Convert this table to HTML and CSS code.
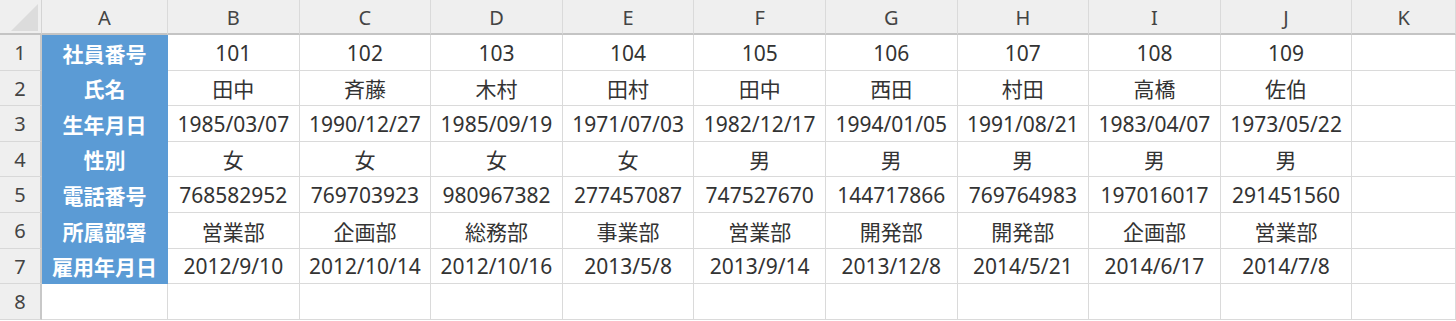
FILE: index.html
```html
<!DOCTYPE html>
<html lang="ja">
<head>
<meta charset="utf-8">
<title>社員一覧</title>
<link rel="stylesheet" href="styles.css">
</head>
<body>
<div class="sheet">
  <div class="corner"><svg class="tri" width="28" height="28" viewBox="0 0 28 28"><polygon points="27,0 27,27 0,27" fill="#dcdcdc"/></svg></div>
  <div class="ch">A</div><div class="ch">B</div><div class="ch">C</div><div class="ch">D</div><div class="ch">E</div><div class="ch">F</div><div class="ch">G</div><div class="ch">H</div><div class="ch">I</div><div class="ch">J</div><div class="ch">K</div>

  <div class="rh">1</div><div class="c lab">社員番号</div><div class="c">101</div><div class="c">102</div><div class="c">103</div><div class="c">104</div><div class="c">105</div><div class="c">106</div><div class="c">107</div><div class="c">108</div><div class="c">109</div><div class="c"></div>
  <div class="rh">2</div><div class="c lab">氏名</div><div class="c">田中</div><div class="c">斉藤</div><div class="c">木村</div><div class="c">田村</div><div class="c">田中</div><div class="c">西田</div><div class="c">村田</div><div class="c">高橋</div><div class="c">佐伯</div><div class="c"></div>
  <div class="rh">3</div><div class="c lab">生年月日</div><div class="c">1985/03/07</div><div class="c">1990/12/27</div><div class="c">1985/09/19</div><div class="c">1971/07/03</div><div class="c">1982/12/17</div><div class="c">1994/01/05</div><div class="c">1991/08/21</div><div class="c">1983/04/07</div><div class="c">1973/05/22</div><div class="c"></div>
  <div class="rh">4</div><div class="c lab">性別</div><div class="c">女</div><div class="c">女</div><div class="c">女</div><div class="c">女</div><div class="c">男</div><div class="c">男</div><div class="c">男</div><div class="c">男</div><div class="c">男</div><div class="c"></div>
  <div class="rh">5</div><div class="c lab">電話番号</div><div class="c">768582952</div><div class="c">769703923</div><div class="c">980967382</div><div class="c">277457087</div><div class="c">747527670</div><div class="c">144717866</div><div class="c">769764983</div><div class="c">197016017</div><div class="c">291451560</div><div class="c"></div>
  <div class="rh">6</div><div class="c lab">所属部署</div><div class="c">営業部</div><div class="c">企画部</div><div class="c">総務部</div><div class="c">事業部</div><div class="c">営業部</div><div class="c">開発部</div><div class="c">開発部</div><div class="c">企画部</div><div class="c">営業部</div><div class="c"></div>
  <div class="rh">7</div><div class="c lab">雇用年月日</div><div class="c">2012/9/10</div><div class="c">2012/10/14</div><div class="c">2012/10/16</div><div class="c">2013/5/8</div><div class="c">2013/9/14</div><div class="c">2013/12/8</div><div class="c">2014/5/21</div><div class="c">2014/6/17</div><div class="c">2014/7/8</div><div class="c"></div>
  <div class="rh">8</div><div class="c"></div><div class="c"></div><div class="c"></div><div class="c"></div><div class="c"></div><div class="c"></div><div class="c"></div><div class="c"></div><div class="c"></div><div class="c"></div><div class="c"></div>
</div>
</body>
</html>
```
FILE: styles.css
```css
html, body {
  margin: 0;
  padding: 0;
  background: #ffffff;
  overflow: hidden;
}
.sheet {
  display: grid;
  grid-template-columns: 42px 126px repeat(9, 131.6px) 1fr;
  grid-template-rows: 35px 36px 35px 36px 35px 36px 36px 35px 36px;
  width: 1456px;
  height: 321px;
  font-family: "Noto Sans", "Noto Sans CJK JP", sans-serif;
  color: #333333;
}
.corner {
  background: #efefef;
  border-bottom: 2px solid #c4c4c4;
  border-right: 1px solid #d4d4d4;
  display: flex;
  justify-content: flex-end;
  align-items: flex-end;
  padding: 0 2px 1px 0;
  box-sizing: border-box;
}
.tri { display: block; }
.ch {
  background: #efefef;
  border-bottom: 2px solid #c4c4c4;
  border-right: 1px solid #dadada;
  box-sizing: border-box;
  display: flex;
  align-items: center;
  justify-content: center;
  font-size: 20px;
  color: #444444;
  padding-top: 1px;
}
.rh {
  background: #efefef;
  border-right: 2px solid #c8c8c8;
  border-bottom: 1px solid #d8d8d8;
  box-sizing: border-box;
  display: flex;
  align-items: center;
  justify-content: center;
  font-size: 20px;
  color: #444444;
}
.c {
  border-right: 1px solid #dadada;
  border-bottom: 1px solid #dadada;
  box-sizing: border-box;
  display: flex;
  align-items: center;
  justify-content: center;
  font-size: 21px;
  white-space: nowrap;
  overflow: hidden;
  color: #333333;
}
.lab {
  background: #5b9bd5;
  border-color: #5b9bd5;
  color: #ffffff;
  font-weight: bold;
  font-size: 21px;
}
```
